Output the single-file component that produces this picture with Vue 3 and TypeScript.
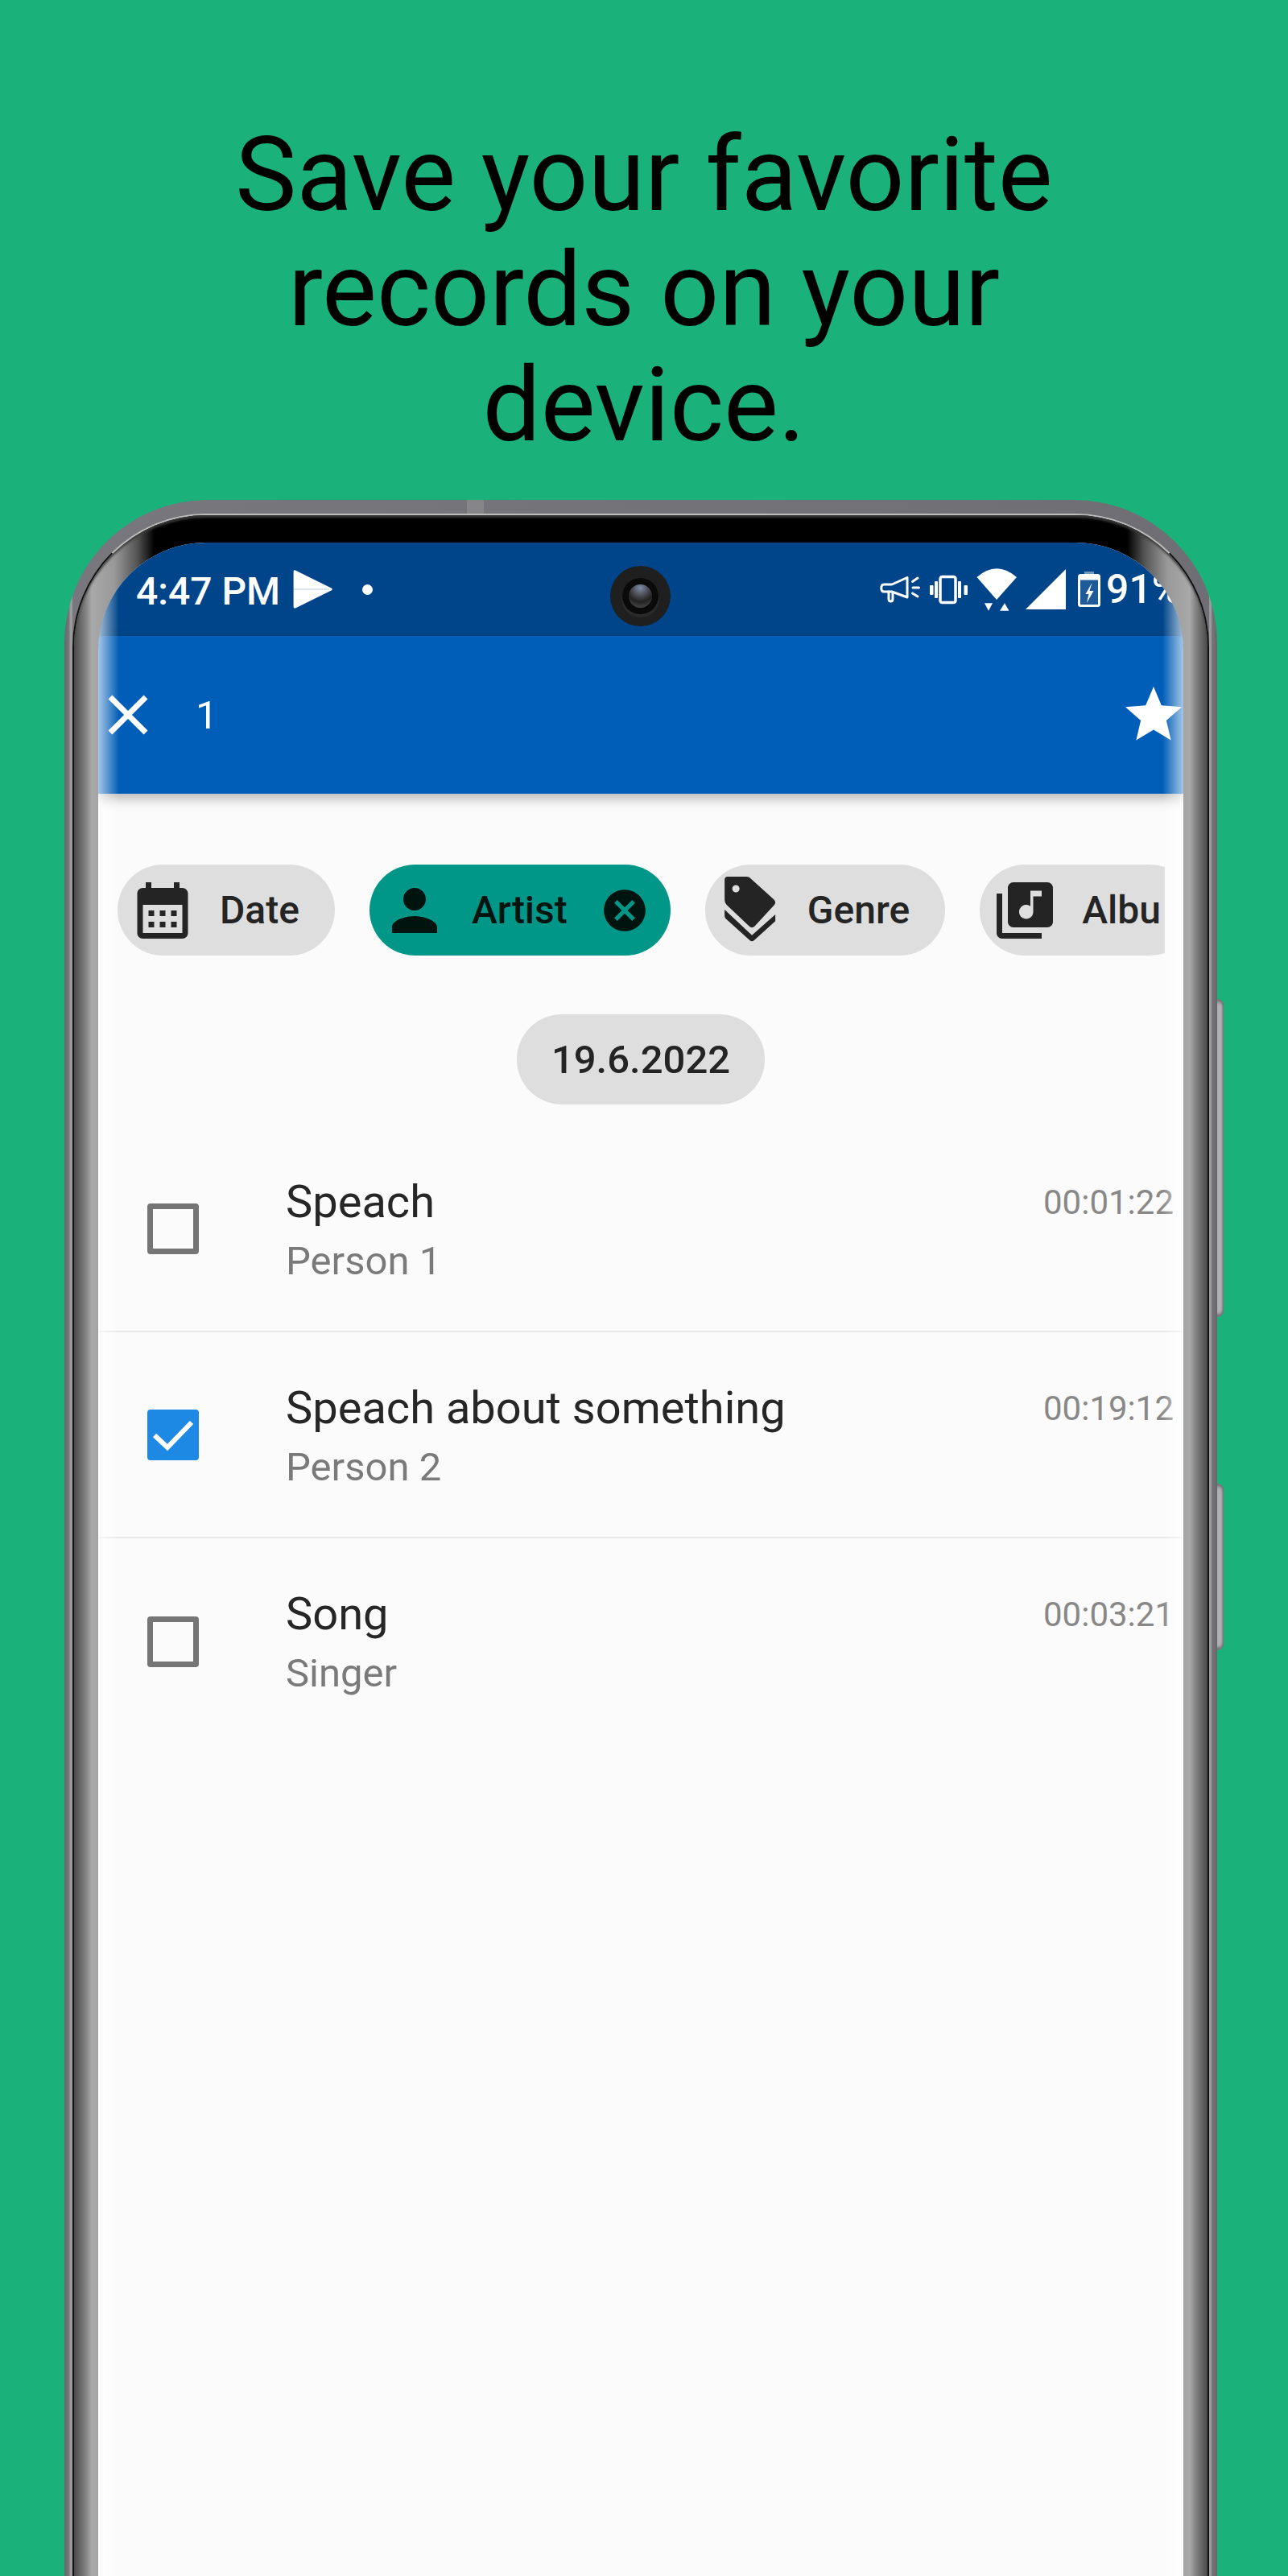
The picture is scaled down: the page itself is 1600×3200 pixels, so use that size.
<template>
  <div class="page">
    <h1 class="headline">Save your favorite records on your device.</h1>

    <div class="phone">
      <span class="speaker"></span>
      <span class="side-btn power"></span>
      <span class="side-btn volume"></span>
      <div class="rim">
        <div class="bezel">
          <div class="screen">
            <div class="status-bar">
              <span class="clock">4:47 PM</span>
              <svg class="ic-send" width="49" height="48" viewBox="0 0 49 48">
                <path d="M1 .5 Q1.800 0 3 .6 L48 22.800 Q49.500 24 48 25.200 L3 47.400 Q.8 48 .6 46 L.6 2 Q.6 1 1 .5z" fill="#fff" />
                <path d="M1 24H45" stroke="#00458a" stroke-opacity=".18" stroke-width="1.500" />
              </svg>
              <span class="notif-dot"></span>

              <span class="camera"><span class="lens"></span></span>

              <div class="status-right">
                <svg class="ic-mega" width="50" height="36" viewBox="0 0 50 36" fill="none" stroke="#fff" stroke-width="3" stroke-linecap="round" stroke-linejoin="round">
                  <path d="M5 12H15L34 3.500V28L15 21H5Q1.800 21 1.800 16.500Q1.800 12 5 12z" />
                  <path d="M11 21V30Q11 33 13.500 33Q16 33 16 30V22" />
                  <path d="M40.500 8.500L47 4M41 16H48.500M40.500 23L47 27" />
                </svg>
                <svg class="ic-vib" width="49" height="37" viewBox="0 0 49 37" fill="#fff">
                  <rect x="14" y="2.500" width="19" height="32" rx="2.500" fill="none" stroke="#fff" stroke-width="3.500" />
                  <rect x="1" y="13" width="4.500" height="12" rx="1" />
                  <rect x="7" y="8" width="4" height="21" rx="1" />
                  <rect x="36" y="8" width="4" height="21" rx="1" />
                  <rect x="43.500" y="13" width="4.500" height="12" rx="1" />
                </svg>
                <svg class="ic-wifi" width="50" height="53" viewBox="0 0 50 53" fill="#fff">
                  <path d="M.5 11Q25 -10.400 50 11L25 39z" />
                  <path d="M10 43.300H20L15 52.700z" />
                  <path d="M29 52.700H40.500L35 43.300z" />
                </svg>
                <svg class="ic-signal" width="50" height="50" viewBox="0 0 50 50" fill="#fff">
                  <path d="M0 50H50V0z" />
                </svg>
                <svg class="ic-battery" width="28" height="44" viewBox="0 0 28 44">
                  <rect x="8" y="0" width="12" height="4" fill="#fff" fill-opacity=".45" />
                  <rect x="1.500" y="4.500" width="25" height="38" rx="2" fill="#fff" fill-opacity=".12" stroke="#fff" stroke-width="3" />
                  <rect x="1.500" y="4.500" width="25" height="6" fill="#fff" />
                  <path d="M17.500 14L9.500 28H13.500L11 39L19.500 24H14.500z" fill="#fff" />
                </svg>
                <span class="battery-text">91%</span>
              </div>
            </div>

            <div class="app-bar">
              <svg class="ic-close" width="84" height="84" viewBox="0 0 24 24" fill="#fff">
                <path d="M19 6.410L17.590 5 12 10.590 6.410 5 5 6.410 10.590 12 5 17.590 6.410 19 12 13.410 17.590 19 19 17.590 13.410 12z" />
              </svg>
              <span class="selected-count">{{ selectedCount }}</span>
              <svg class="ic-star" width="84" height="84" viewBox="0 0 24 24" fill="#fff">
                <path d="M12 17.270L18.180 21l-1.640-7.030L22 9.240l-7.190-.61L12 2 9.190 8.630 2 9.240l5.460 4.730L5.820 21z" />
              </svg>
            </div>

            <div class="chips">
              <div v-for="chip in chips" :key="chip.label" class="chip" :class="{ active: chip.active }">
                <svg width="84" height="84" viewBox="0 0 24 24" fill="currentColor">
                  <path :d="chip.icon" fill-rule="evenodd" />
                </svg>
                <span class="chip-label">{{ chip.label }}</span>
                <svg v-if="chip.active" class="chip-clear" width="62" height="62" viewBox="0 0 24 24" fill="currentColor">
                  <path d="M12 2C6.470 2 2 6.470 2 12s4.470 10 10 10 10-4.470 10-10S17.530 2 12 2zm5 13.590L15.590 17 12 13.410 8.410 17 7 15.590 10.590 12 7 8.410 8.410 7 12 10.590 15.590 7 17 8.410 13.410 12 17 15.590z" />
                </svg>
              </div>
            </div>

            <div class="date-pill">19.6.2022</div>

            <div class="records">
              <div v-for="record in records" :key="record.title" class="record">
                <span class="checkbox" :class="{ checked: record.checked }">
                  <svg v-if="record.checked" width="64" height="63" viewBox="0 0 64 63" fill="none">
                    <path d="M9 32L25 47L55 16" stroke="#fff" stroke-width="6" />
                  </svg>
                </span>
                <div class="record-text">
                  <div class="record-title">{{ record.title }}</div>
                  <div class="record-artist">{{ record.artist }}</div>
                </div>
                <span class="record-time">{{ record.time }}</span>
              </div>
            </div>

            <span class="edge left"></span>
            <span class="edge right"></span>
          </div>
        </div>
      </div>
    </div>
  </div>
</template>

<script setup lang="ts">
import { computed, ref } from 'vue';

interface Chip {
  label: string;
  icon: string;
  active?: boolean;
}

interface RecordItem {
  title: string;
  artist: string;
  time: string;
  checked: boolean;
}

const chips: Chip[] = [
  {
    label: 'Date',
    icon: 'M19 4h-1V2h-2v2H8V2H6v2H5C3.890 4 3 4.900 3 6v14c0 1.100.89 2 2 2h14c1.100 0 2-.9 2-2V6C21 4.900 20.100 4 19 4zM19 20H5V10h14V20zM9 14H7v-2h2V14zM13 14h-2v-2h2V14zM17 14h-2v-2h2V14zM9 18H7v-2h2V18zM13 18h-2v-2h2V18zM17 18h-2v-2h2V18z',
  },
  {
    label: 'Artist',
    icon: 'M12 12c2.210 0 4-1.790 4-4s-1.790-4-4-4-4 1.790-4 4 1.790 4 4 4zm0 2c-2.670 0-8 1.340-8 4v2h16v-2c0-2.660-5.330-4-8-4z',
    active: true,
  },
  {
    label: 'Genre',
    icon: 'M4 0h6.600q1 0 1.600.7L20.500 8.200q.8 1 0 1.900L13.600 17.600q-1 1-2 0L3.600 10q-.7-.7-.7-1.700V1.100Q2.900 0 4 0zM6.900 3a1.300 1.300 0 1 0 0 2.600a1.300 1.300 0 1 0 0-2.600zM2.900 11.700L12.600 20.800L20.900 13.400V15.800L13.400 22.600q-.8.7-1.600 0L3.400 15q-.5-.5-.5-1.100z',
  },
  {
    label: 'Album',
    icon: 'M20 2H8c-1.100 0-2 .9-2 2v12c0 1.100.9 2 2 2h12c1.100 0 2-.9 2-2V4c0-1.100-.9-2-2-2zm-2 5h-3v5.500c0 1.380-1.120 2.500-2.500 2.500S10 13.880 10 12.500s1.120-2.500 2.500-2.500c.57 0 1.080.19 1.500.51V5h4v2zM4 6H2v14c0 1.100.9 2 2 2h14v-2H4V6z',
  },
];

const records = ref<RecordItem[]>([
  { title: 'Speach', artist: 'Person 1', time: '00:01:22', checked: false },
  { title: 'Speach about something', artist: 'Person 2', time: '00:19:12', checked: true },
  { title: 'Song', artist: 'Singer', time: '00:03:21', checked: false },
]);

const selectedCount = computed(() => records.value.filter((r) => r.checked).length);
</script>

<style>
body {
  background: #1ab17a;
}
</style>

<style scoped>
.page {
  height: 3200px;
  overflow: hidden;
  background: #1ab17a;
  font-family: Roboto, sans-serif;
}

.headline {
  box-sizing: border-box;
  height: 621px;
  margin: 0;
  padding: 146px 270px 0;
  font-size: 128px;
  font-weight: 400;
  line-height: 143px;
  text-align: center;
  color: #000;
}

.phone {
  position: relative;
  width: 1432px;
  height: 2800px;
  margin-left: 80px;
  padding: 17px 10px 0;
  box-sizing: border-box;
  border-radius: 178px 178px 0 0;
  background: linear-gradient(90deg, #66666b 0, #77777d 6px, #9a9a9a 7px, #9a9a9a 10px, #77777d 10px, #6e6e74 calc(100% - 10px), #9a9a9a calc(100% - 10px), #9a9a9a calc(100% - 7px), #77777d calc(100% - 7px), #66666b 100%);
}

.speaker {
  position: absolute;
  top: 0;
  left: 500px;
  width: 21px;
  height: 17px;
  background: #85858a;
}

.side-btn {
  position: absolute;
  left: 100%;
  width: 8px;
  border-radius: 0 8px 8px 0;
  background: linear-gradient(90deg, #b6b6bc 0, #aeaeb3 60%, #77777b 100%);
  box-shadow: inset 0 6px 4px -3px #66666a, inset 0 -6px 4px -3px #66666a;
}

.power {
  top: 620px;
  height: 395px;
}

.volume {
  top: 1222px;
  height: 207px;
}

.rim {
  height: 100%;
  box-sizing: border-box;
  border-top: 2px solid #bcbcbc;
  border-left: 2px solid #111;
  border-right: 2px solid #111;
  border-radius: 166px 166px 0 0;
}

.bezel {
  height: 100%;
  box-sizing: border-box;
  padding: 34px 30px 0;
  border-radius: 164px 164px 0 0;
  box-shadow: inset 0 4px 3px -1px #3a3a3a;
  background: linear-gradient(
    90deg,
    #4a4a4a 0,
    #808080 14px,
    #a9a9a9 22px,
    #999 50px,
    #555 78px,
    #000 100px,
    #000 calc(100% - 100px),
    #555 calc(100% - 78px),
    #999 calc(100% - 50px),
    #a9a9a9 calc(100% - 22px),
    #808080 calc(100% - 14px),
    #4a4a4a 100%
  );
}

.screen {
  position: relative;
  display: flex;
  flex-direction: column;
  height: 100%;
  overflow: hidden;
  border-radius: 134px 134px 0 0;
  background: #fbfbfb;
}

.status-bar {
  position: relative;
  display: flex;
  align-items: center;
  flex-shrink: 0;
  height: 116px;
  padding-left: 47px;
  background: #00458a;
  color: #fff;
  white-space: nowrap;
}

.clock {
  padding-top: 4px;
  margin-right: 16px;
  font-size: 48px;
  font-weight: 500;
}

.notif-dot {
  width: 13px;
  height: 13px;
  margin-left: 37px;
  border-radius: 50%;
  background: #fff;
}

.camera {
  position: absolute;
  top: 29px;
  left: 636px;
  display: flex;
  align-items: center;
  justify-content: center;
  width: 75px;
  height: 75px;
  border-radius: 50%;
  background: #1f1f1f;
}

.lens {
  width: 29px;
  height: 29px;
  border-radius: 50%;
  background: radial-gradient(circle at 50% 15%, #7f8ea8 0, #4a4a52 35%, #222 60%, #555 100%);
  box-shadow: 0 0 0 8px #0a0a0a, 0 3px 0 9px #2a2a2a;
}

.status-right {
  display: flex;
  align-items: center;
  position: absolute;
  left: 971px;
  top: 0;
  height: 116px;
}

.ic-vib {
  margin-left: 11px;
}

.ic-wifi {
  margin-left: 10px;
}

.ic-signal {
  margin-left: 11px;
}

.ic-battery {
  margin-left: 15px;
}

.battery-text {
  margin-left: 7px;
  font-size: 50px;
  font-weight: 500;
}

.app-bar {
  display: flex;
  align-items: center;
  justify-content: space-between;
  flex-shrink: 0;
  height: 196px;
  margin: 0 -5px;
  background: #005db8;
  box-shadow: 0 6px 14px rgba(0, 0, 0, 0.28);
  color: #fff;
  z-index: 1;
}

.selected-count {
  flex: 1;
  margin-left: 42px;
  font-size: 49px;
}

.chips {
  display: flex;
  gap: 43px;
  flex-shrink: 0;
  margin: 88px 23px 0 0;
  padding-left: 24px;
  overflow: hidden;
}

.chip {
  display: flex;
  align-items: center;
  flex-shrink: 0;
  box-sizing: border-box;
  height: 113px;
  padding: 0 44px 0 14px;
  border-radius: 57px;
  background: #dedede;
  color: #242424;
}

.chip.active {
  padding-right: 26px;
  background: #009688;
  color: #00140f;
}

.chip-label {
  margin-left: 29px;
  font-size: 48px;
  font-weight: 500;
}

.chip:last-child .chip-label {
  max-width: 97px;
  overflow: hidden;
}

.chip-clear {
  margin-left: 40px;
}

.date-pill {
  align-self: center;
  flex-shrink: 0;
  box-sizing: border-box;
  height: 112px;
  margin-top: 73px;
  padding: 2px 43px 0;
  border-radius: 56px;
  background: #dedede;
  font-size: 49px;
  font-weight: 500;
  line-height: 110px;
  color: #242424;
}

.records {
  margin-top: 27px;
}

.record {
  display: flex;
  align-items: center;
  box-sizing: border-box;
  height: 256px;
  padding: 0 12px 0 61px;
  border-bottom: 2px solid #e8e8e8;
}

.record:last-child {
  border-bottom: none;
}

.checkbox {
  flex-shrink: 0;
  box-sizing: border-box;
  width: 64px;
  height: 63px;
  border: 7px solid #757575;
  border-radius: 4px;
}

.checkbox.checked {
  border: none;
  background: #1e88e5;
}

.checkbox svg {
  display: block;
}

.record-text {
  flex: 1;
  align-self: flex-start;
  margin: 61px 0 0 108px;
}

.record-title {
  font-size: 56px;
  color: #262626;
}

.record-artist {
  margin-top: 12px;
  font-size: 49px;
  color: #7a7a7a;
}

.record-time {
  align-self: flex-start;
  margin-top: 70px;
  font-size: 42px;
  color: #888;
}

.edge {
  position: absolute;
  top: 0;
  bottom: 0;
  width: 26px;
  z-index: 2;
}

.edge.left {
  left: 0;
  background: linear-gradient(90deg, rgba(255, 255, 255, 0.65), rgba(255, 255, 255, 0));
}

.edge.right {
  right: 0;
  background: linear-gradient(270deg, rgba(255, 255, 255, 0.65), rgba(255, 255, 255, 0));
}
</style>
